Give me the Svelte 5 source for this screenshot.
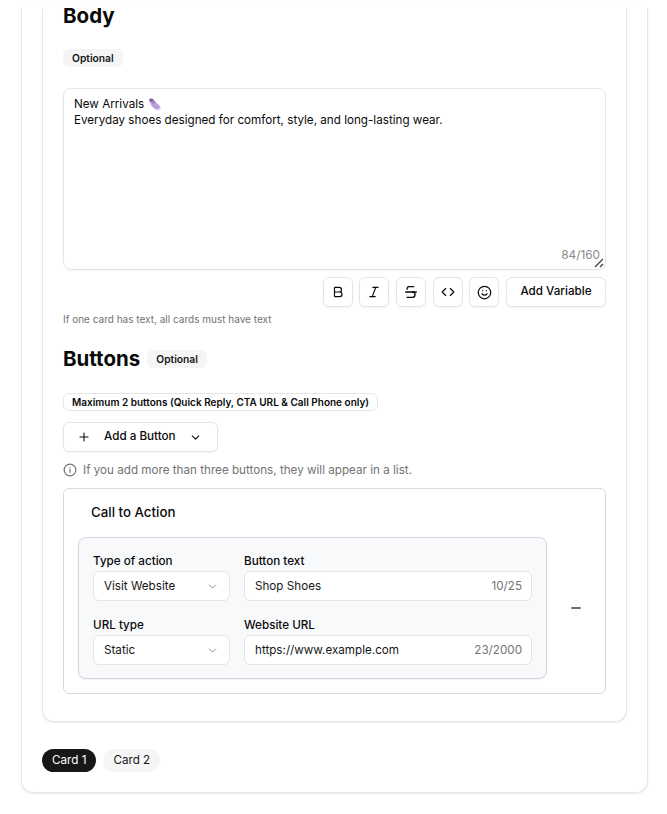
<script lang="ts">
    let cards = ["Card 1", "Card 2"];
    let active = $state("Card 1");
</script>

<div class="page">
    <div class="outer">
        <div class="inner">
            <h2 class="title first">Body</h2>
            <div class="body-badge"><span class="badge">Optional</span></div>

            <div class="textarea">
                <div class="msg">New Arrivals <svg class="shoe" width="13" height="13" viewBox="0 0 13 13"><path d="M1 1.5 3 .5 5 1 12 8.5 12.5 11 10.5 12.5 7.5 11.5 3.5 8Z" fill="#b9a0dc" /><path d="M1 1.5 3 .5 5 1 5.5 2.5 2.5 4.5Z" fill="#7f62ab" /><path d="M4 4 6 3 7 4.5 5 6Z" fill="#8f74bd" /><path d="M7.5 11.5 10.5 12.5 12.5 11 12 9.5 10 11Z" fill="#e6def2" /></svg><br />Everyday shoes designed for comfort, style, and long-lasting wear.</div>
                <span class="count">84/160</span>
                <svg class="grip" width="10" height="10" viewBox="0 0 10 10" fill="none" stroke="#444" stroke-width="1.2"><line x1="1" y1="9" x2="9" y2="1" /><line x1="6" y1="9" x2="9" y2="6" /></svg>
            </div>

            <div class="toolbar">
                <button class="tool" title="Bold">
                    <svg width="14" height="14" viewBox="0 0 24 24" fill="none" stroke="currentColor" stroke-width="2" stroke-linecap="round" stroke-linejoin="round"><path d="M6 12h9a4 4 0 0 1 0 8H7a1 1 0 0 1-1-1V5a1 1 0 0 1 1-1h7a4 4 0 0 1 0 8" /></svg>
                </button>
                <button class="tool" title="Italic">
                    <svg width="14" height="14" viewBox="0 0 24 24" fill="none" stroke="currentColor" stroke-width="2" stroke-linecap="round" stroke-linejoin="round"><line x1="19" y1="4" x2="10" y2="4" /><line x1="14" y1="20" x2="5" y2="20" /><line x1="15" y1="4" x2="9" y2="20" /></svg>
                </button>
                <button class="tool" title="Strikethrough">
                    <svg width="16" height="16" viewBox="0 0 24 24" fill="none" stroke="currentColor" stroke-width="2" stroke-linecap="round" stroke-linejoin="round"><path d="M16 4H9a3 3 0 0 0-2.83 4" /><path d="M14 12a4 4 0 0 1 0 8H6" /><line x1="4" y1="12" x2="20" y2="12" /></svg>
                </button>
                <button class="tool" title="Code">
                    <svg width="14" height="14" viewBox="0 0 24 24" fill="none" stroke="currentColor" stroke-width="2" stroke-linecap="round" stroke-linejoin="round"><polyline points="16 18 22 12 16 6" /><polyline points="8 6 2 12 8 18" /></svg>
                </button>
                <button class="tool" title="Emoji">
                    <svg width="15" height="15" viewBox="0 0 24 24" fill="none" stroke="currentColor" stroke-width="2" stroke-linecap="round" stroke-linejoin="round"><circle cx="12" cy="12" r="10" /><path d="M8 14s1.5 2 4 2 4-2 4-2" /><line x1="9" y1="9" x2="9.01" y2="9" /><line x1="15" y1="9" x2="15.01" y2="9" /></svg>
                </button>
                <button class="variable">Add Variable</button>
            </div>
            <p class="hint">If one card has text, all cards must have text</p>

            <div class="buttons-head">
                <h2 class="title">Buttons</h2>
                <span class="badge">Optional</span>
            </div>
            <div class="max-row"><span class="max-note">Maximum 2 buttons (Quick Reply, CTA URL &amp; Call Phone only)</span></div>

            <button class="add-btn">
                <svg width="16" height="16" viewBox="0 0 24 24" fill="none" stroke="currentColor" stroke-width="1.6" stroke-linecap="round"><line x1="12" y1="6" x2="12" y2="18" /><line x1="6" y1="12" x2="18" y2="12" /></svg>
                <span>Add a Button</span>
                <svg width="13" height="13" viewBox="0 0 24 24" fill="none" stroke="currentColor" stroke-width="2" stroke-linecap="round" stroke-linejoin="round"><polyline points="6 9 12 15 18 9" /></svg>
            </button>

            <div class="info">
                <svg width="14" height="14" viewBox="0 0 24 24" fill="none" stroke="currentColor" stroke-width="2" stroke-linecap="round"><circle cx="12" cy="12" r="10" /><line x1="12" y1="16" x2="12" y2="11" /><line x1="12" y1="8" x2="12.01" y2="8" /></svg>
                <span>If you add more than three buttons, they will appear in a list.</span>
            </div>

            <div class="cta">
                <div class="cta-title">Call to Action</div>
                <div class="cta-row">
                    <div class="cta-grid">
                        <div class="field">
                            <span class="label">Type of action</span>
                            <div class="input"><span>Visit Website</span>
                                <svg class="caret" width="13" height="13" viewBox="0 0 24 24" fill="none" stroke="currentColor" stroke-width="1.7" stroke-linecap="round" stroke-linejoin="round"><polyline points="6 9 12 15 18 9" /></svg>
                            </div>
                        </div>
                        <div class="field">
                            <span class="label">Button text</span>
                            <div class="input"><span>Shop Shoes</span><span class="limit">10/25</span></div>
                        </div>
                        <div class="field">
                            <span class="label">URL type</span>
                            <div class="input"><span>Static</span>
                                <svg class="caret" width="13" height="13" viewBox="0 0 24 24" fill="none" stroke="currentColor" stroke-width="1.7" stroke-linecap="round" stroke-linejoin="round"><polyline points="6 9 12 15 18 9" /></svg>
                            </div>
                        </div>
                        <div class="field">
                            <span class="label">Website URL</span>
                            <div class="input"><span>https://www.example.com</span><span class="limit">23/2000</span></div>
                        </div>
                    </div>
                    <button class="remove" title="Remove">
                        <svg width="16" height="16" viewBox="0 0 24 24" fill="none" stroke="currentColor" stroke-width="1.8"><line x1="5" y1="12" x2="19" y2="12" /></svg>
                    </button>
                </div>
            </div>
        </div>

        <div class="tabs">
            {#each cards as card (card)}
                <button class="tab" class:active={active === card} onclick={() => (active = card)}>{card}</button>
            {/each}
        </div>
    </div>
</div>

<style>
    :global(body) {
        background: #fff;
        font-family: Inter, "Liberation Sans", sans-serif;
        color: #0a0a0a;
    }

    .page {
        height: 814px;
        box-sizing: border-box;
        padding: 8px 19px 0 21px;
        overflow: hidden;
    }

    .outer {
        height: 785px;
        box-sizing: border-box;
        border: 1px solid #e5e5e5;
        border-top: none;
        border-radius: 0 0 12px 12px;
        box-shadow: 0 1px 2px rgba(0, 0, 0, 0.08);
        padding: 0 20px;
    }

    .inner {
        height: 714px;
        box-sizing: border-box;
        border: 1px solid #e5e5e5;
        border-top: none;
        border-radius: 0 0 12px 12px;
        box-shadow: 0 1px 2px rgba(0, 0, 0, 0.08);
        padding: 0 20px;
    }

    .title {
        margin: 0;
        font-size: 20.5px;
        line-height: 28px;
        font-weight: 700;
        color: #0a0a0a;
    }

    .title.first {
        line-height: 16px;
    }

    .body-badge {
        display: flex;
        margin-top: 25px;
    }

    .badge {
        display: inline-block;
        padding: 0 9px;
        height: 18px;
        line-height: 18px;
        border-radius: 6px;
        background: #f5f5f5;
        font-size: 10.25px;
        font-weight: 600;
        color: #171717;
    }

    .textarea {
        position: relative;
        margin-top: 21px;
        height: 182px;
        box-sizing: border-box;
        border: 1px solid #e5e5e5;
        border-radius: 8px;
        padding: 7px 10px;
        box-shadow: 0 1px 2px rgba(0, 0, 0, 0.04);
    }

    .msg {
        font-size: 11.67px;
        line-height: 16px;
        color: #0a0a0a;
    }

    .shoe {
        vertical-align: -3px;
        margin-left: 1px;
    }

    .count {
        position: absolute;
        right: 5px;
        bottom: 6px;
        font-size: 11.8px;
        line-height: 16px;
        color: #8a8a8a;
    }

    .grip {
        position: absolute;
        right: 1px;
        bottom: 1px;
    }

    .toolbar {
        display: flex;
        justify-content: flex-end;
        gap: 6.67px;
        margin-top: 7px;
    }

    .tool,
    .variable,
    .add-btn {
        background: #fff;
        border: 1px solid #e5e5e5;
        border-radius: 6px;
        box-shadow: 0 1px 2px rgba(0, 0, 0, 0.05);
        color: #0a0a0a;
        font-family: inherit;
        cursor: pointer;
    }

    .tool {
        width: 30px;
        height: 30px;
        padding: 0;
        display: flex;
        align-items: center;
        justify-content: center;
    }

    .variable {
        width: 100px;
        height: 30px;
        padding: 0 0 2px;
        font-size: 11.67px;
        font-weight: 450;
    }

    .hint {
        margin: 5px 0 0;
        font-size: 10px;
        line-height: 14px;
        color: #737373;
    }

    .buttons-head {
        display: flex;
        align-items: center;
        gap: 7px;
        margin-top: 19px;
    }

    .max-row {
        display: flex;
        margin-top: 20px;
    }

    .max-note {
        height: 18px;
        line-height: 17px;
        box-sizing: border-box;
        padding: 0 8px;
        border: 1px solid #e5e5e5;
        border-radius: 6px;
        font-size: 10px;
        font-weight: 600;
        white-space: nowrap;
        color: #0a0a0a;
    }

    .add-btn {
        display: flex;
        align-items: center;
        width: 155px;
        height: 30px;
        margin-top: 11px;
        padding: 0 15px 0 12px;
        font-size: 11.67px;
        font-weight: 450;
    }

    .add-btn span {
        margin: -2px auto 0 12px;
    }

    .info {
        display: flex;
        align-items: center;
        gap: 6px;
        margin-top: 10px;
        font-size: 11.67px;
        line-height: 16px;
        color: #737373;
    }

    .cta {
        margin-top: 10px;
        height: 206px;
        box-sizing: border-box;
        border: 1px solid #d9d9de;
        border-radius: 6px;
        padding: 14px 14px 0;
    }

    .cta-title {
        margin-left: 13px;
        font-size: 13.3px;
        line-height: 18px;
        font-weight: 450;
    }

    .cta-row {
        display: flex;
        align-items: center;
        margin-top: 16px;
    }

    .cta-grid {
        width: 469px;
        box-sizing: border-box;
        display: grid;
        grid-template-columns: 137px 1fr;
        gap: 16px 14px;
        padding: 15px 14px 13px;
        background: #f8f9fb;
        border: 1px solid #d4d6dc;
        border-radius: 8px;
        box-shadow: 0 1px 2px rgba(0, 0, 0, 0.05);
    }

    .field {
        display: flex;
        flex-direction: column;
        gap: 2px;
    }

    .label {
        font-size: 11.67px;
        line-height: 16px;
        font-weight: 450;
        color: #0a0a0a;
    }

    .input {
        display: flex;
        align-items: center;
        justify-content: space-between;
        height: 30px;
        box-sizing: border-box;
        padding: 0 9px 0 10px;
        background: #fff;
        border: 1px solid #e5e5e5;
        border-radius: 6px;
        font-size: 11.67px;
        color: #171717;
    }

    .caret {
        color: #8a8a8a;
        margin-right: 1px;
    }

    .limit {
        color: #737373;
        font-size: 11.67px;
    }

    .remove {
        margin-left: 21px;
        width: 16px;
        height: 16px;
        padding: 0;
        background: none;
        border: none;
        color: #0a0a0a;
    }

    .tabs {
        display: flex;
        gap: 7px;
        margin-top: 27px;
    }

    .tab {
        height: 23px;
        padding: 0 10px 1px;
        border: none;
        border-radius: 12px;
        background: #f5f5f5;
        color: #171717;
        font-family: inherit;
        font-size: 11.67px;
        cursor: pointer;
    }

    .tab.active {
        background: #171717;
        color: #fff;
    }
</style>
